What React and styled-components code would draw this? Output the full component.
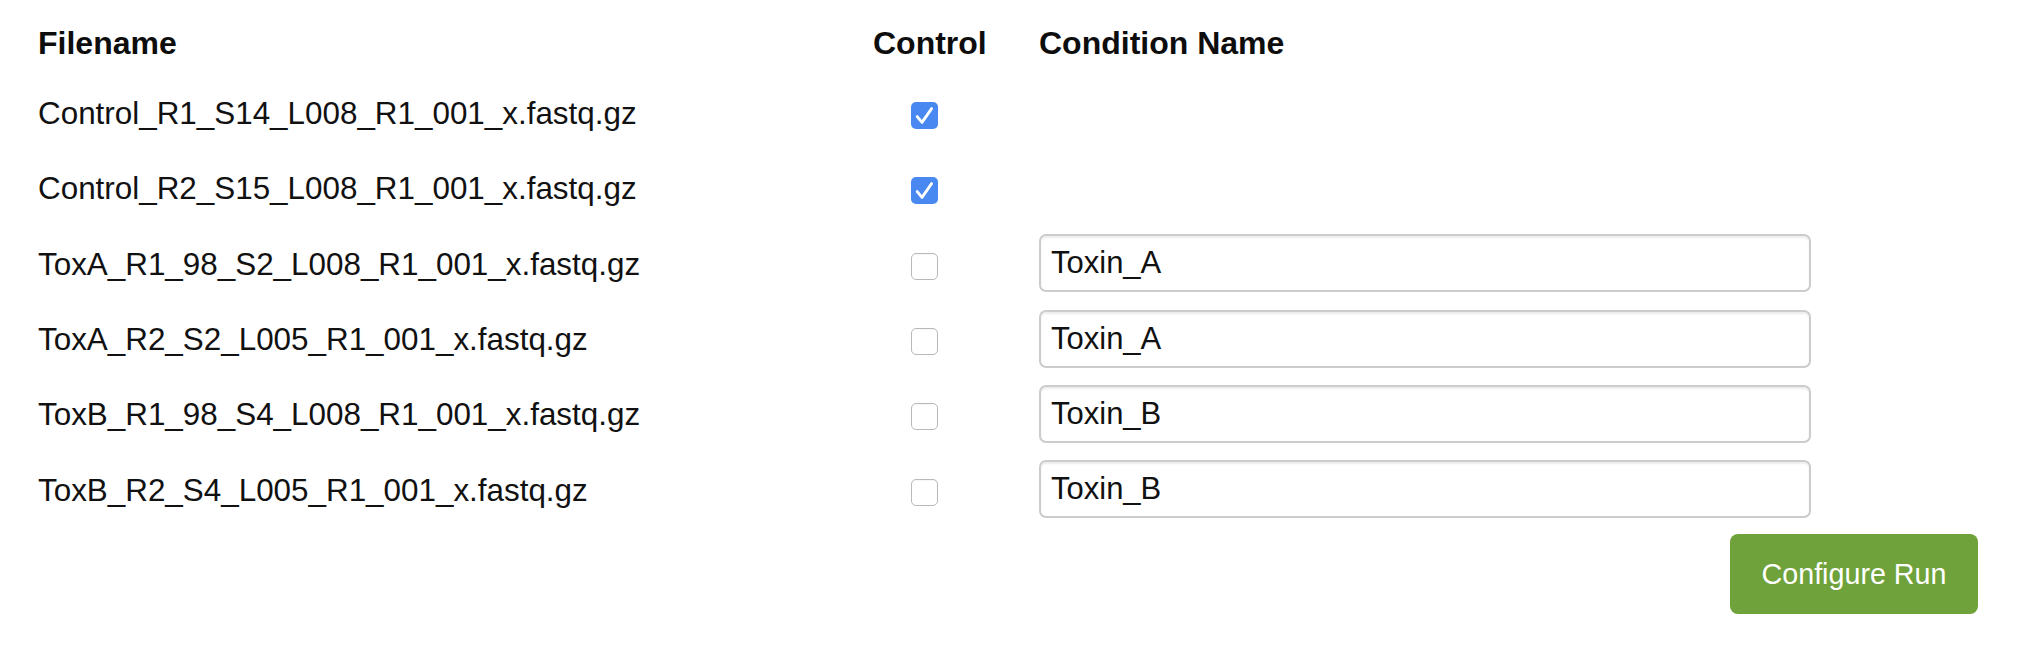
import React from "react";
import styled, { createGlobalStyle } from "styled-components";

const GlobalStyle = createGlobalStyle`
  html, body {
    margin: 0;
    padding: 0;
    background: #ffffff;
  }
  body {
    font-family: "Liberation Sans", Arial, Helvetica, sans-serif;
    color: #111111;
  }
  * { box-sizing: border-box; }
`;

const Page = styled.div`
  width: 2022px;
  padding: 19px 44px 40px 38px;
`;

const Table = styled.div`
  display: grid;
  grid-template-columns: 835px 166px 772px;
`;

const HeaderCell = styled.div`
  height: 48px;
  line-height: 48px;
  margin-bottom: 9.5px;
  font-size: 32px;
  font-weight: 700;
  color: #0d0d0d;
  white-space: nowrap;
`;

const Cell = styled.div`
  height: 75.3px;
  display: flex;
  align-items: center;
  padding-left: ${(p) => p.$pad || 0}px;
`;

const FileName = styled.span`
  font-size: 31.4px;
  line-height: 40px;
  color: #111111;
  white-space: nowrap;
`;

const Box = styled.span`
  display: inline-flex;
  align-items: center;
  justify-content: center;
  width: 27px;
  height: 27px;
  margin-top: 3px;
  border-radius: 5px;
  background: ${(p) => (p.$checked ? "#4a88f1" : "#ffffff")};
  border: ${(p) => (p.$checked ? "none" : "1.5px solid #b9b9b9")};
  box-shadow: ${(p) =>
    p.$checked ? "none" : "inset 0 1px 1px rgba(0,0,0,0.04)"};
  cursor: pointer;
`;

const TextInput = styled.input`
  width: 772px;
  height: 58px;
  margin-bottom: 3px;
  padding: 0 10px;
  border: 2px solid #cccccc;
  border-radius: 7px;
  box-shadow: inset 0 2px 2px rgba(0, 0, 0, 0.075);
  font-family: "Liberation Sans", Arial, Helvetica, sans-serif;
  font-size: 31px;
  color: #111111;
  background: #ffffff;
  outline: none;
`;

const Actions = styled.div`
  display: flex;
  justify-content: flex-end;
  margin-top: 6px;
`;

const Button = styled.button`
  width: 248px;
  height: 80px;
  border: none;
  border-radius: 8px;
  background: #6fa23a;
  color: #ffffff;
  font-family: "Liberation Sans", Arial, Helvetica, sans-serif;
  font-size: 28.7px;
  cursor: pointer;
`;

function Checkbox({ checked }) {
  return (
    <Box $checked={checked} role="checkbox" aria-checked={checked}>
      {checked && (
        <svg width="27" height="27" viewBox="0 0 27 27">
          <path
            d="M6.2 14.6 L11 20.4 L20.6 6.6"
            fill="none"
            stroke="#ffffff"
            strokeWidth="2.8"
            strokeLinecap="round"
            strokeLinejoin="round"
          />
        </svg>
      )}
    </Box>
  );
}

const rows = [
  { file: "Control_R1_S14_L008_R1_001_x.fastq.gz", control: true },
  { file: "Control_R2_S15_L008_R1_001_x.fastq.gz", control: true },
  { file: "ToxA_R1_98_S2_L008_R1_001_x.fastq.gz", control: false, cond: "Toxin_A" },
  { file: "ToxA_R2_S2_L005_R1_001_x.fastq.gz", control: false, cond: "Toxin_A" },
  { file: "ToxB_R1_98_S4_L008_R1_001_x.fastq.gz", control: false, cond: "Toxin_B" },
  { file: "ToxB_R2_S4_L005_R1_001_x.fastq.gz", control: false, cond: "Toxin_B" },
];

export default function App() {
  return (
    <>
      <GlobalStyle />
      <Page>
        <Table>
          <HeaderCell>Filename</HeaderCell>
          <HeaderCell>Control</HeaderCell>
          <HeaderCell>Condition Name</HeaderCell>
          {rows.map((r) => (
            <React.Fragment key={r.file}>
              <Cell>
                <FileName>{r.file}</FileName>
              </Cell>
              <Cell $pad={38}>
                <Checkbox checked={r.control} />
              </Cell>
              <Cell>
                {!r.control && <TextInput defaultValue={r.cond} />}
              </Cell>
            </React.Fragment>
          ))}
        </Table>
        <Actions>
          <Button>Configure Run</Button>
        </Actions>
      </Page>
    </>
  );
}
